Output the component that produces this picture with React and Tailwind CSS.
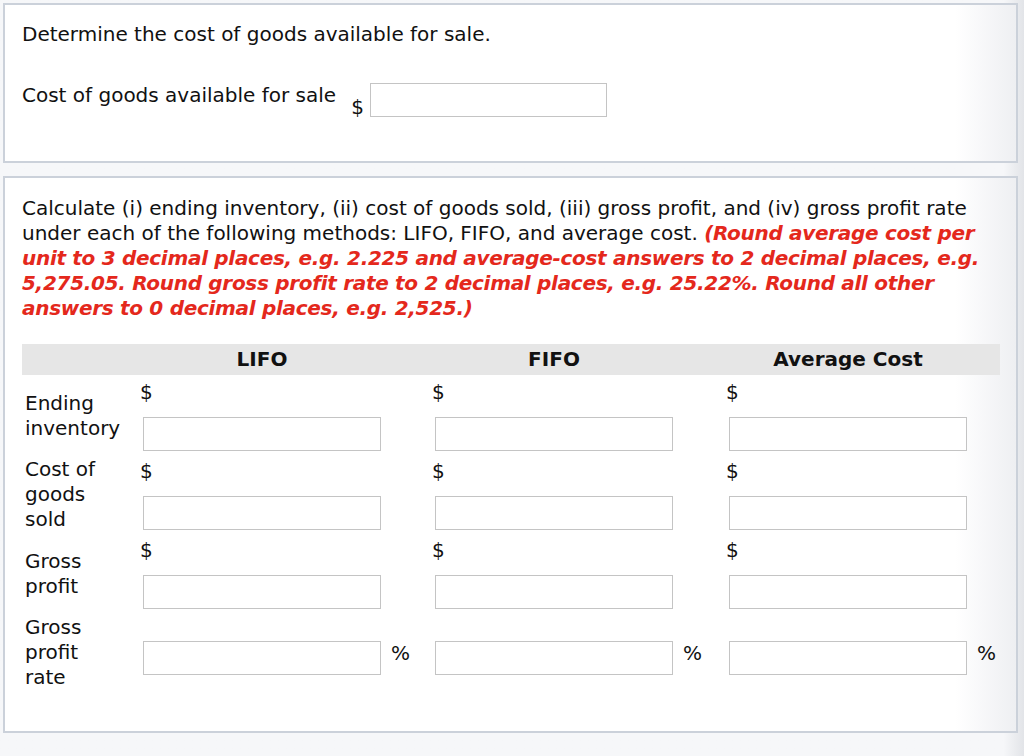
import React from 'react'

const methods = ['LIFO', 'FIFO', 'Average Cost']

const rows = [
  { label: 'Ending inventory', sign: '$' },
  { label: 'Cost of goods sold', sign: '$' },
  { label: 'Gross profit', sign: '$' },
]

function Box({ className = '' }) {
  return (
    <input
      type="text"
      className={`h-[34px] border border-[#c4c4c4] bg-white outline-none ${className}`}
    />
  )
}

export default function App() {
  return (
    <div className="min-h-screen bg-linear-to-r from-[#f6f7f9] from-[98%] to-[#e2e4e8] pl-[3px] pt-[3px] pr-[6px] pb-6 font-['DejaVu_Sans',Verdana,sans-serif] text-[20px] leading-[25px] text-[#111]">
      {/* Cost of goods available */}
      <div className="h-[160px] border-2 border-[#cbd1da] bg-linear-to-r from-white from-[94%] to-[#eeeff2] pl-[17px] pr-4 pt-[17px]">
        <p>Determine the cost of goods available for sale.</p>
        <div className="mt-[36px] flex items-start">
          <span>Cost of goods available for sale</span>
          <span className="ml-[15px] mt-[12px]">$</span>
          <Box className="ml-[6px] w-[237px]" />
        </div>
      </div>

      {/* Inventory methods */}
      <div className="mt-[13px] border-2 border-[#cbd1da] bg-linear-to-r from-white from-[94%] to-[#eeeff2] pl-[17px] pr-4 pt-[18px] pb-[41px]">
        <p>
          Calculate (i) ending inventory, (ii) cost of goods sold, (iii) gross profit, and (iv) gross profit rate
          under each of the following methods: LIFO, FIFO, and average cost.{' '}
          <span className="font-bold italic tracking-[-0.3px] text-[#e4281c]">
            (Round average cost per unit to 3 decimal places, e.g. 2.225 and average-cost answers to 2 decimal
            places, e.g. 5,275.05. Round gross profit rate to 2 decimal places, e.g. 25.22%. Round all other answers
            to 0 decimal places, e.g. 2,525.)
          </span>
        </p>

        <div className="mt-[23px] grid grid-cols-[118px_292px_294px_1fr] bg-[#e6e6e6] py-[3px] font-bold">
          <div />
          {methods.map((m) => (
            <div key={m} className="ml-[3px] w-[238px] text-center">
              {m}
            </div>
          ))}
        </div>

        <div className="mt-[5px] flex flex-col gap-[6px]">
          {rows.map((r) => (
            <div key={r.label} className="grid grid-cols-[118px_292px_294px_1fr] items-center">
              <div className="pl-[3px] pr-[18px]">{r.label}</div>
              {methods.map((m) => (
                <div key={m} className="flex flex-col items-start">
                  <span>{r.sign}</span>
                  <Box className="ml-[3px] mt-[12px] w-[238px]" />
                </div>
              ))}
            </div>
          ))}

          <div className="grid grid-cols-[118px_292px_294px_1fr] items-start">
            <div className="pl-[3px] pr-[18px]">Gross profit rate</div>
            {methods.map((m) => (
              <div key={m} className="mt-[26px] flex items-start">
                <Box className="ml-[3px] w-[238px]" />
                <span className="ml-[10px]">%</span>
              </div>
            ))}
          </div>
        </div>
      </div>
    </div>
  )
}
